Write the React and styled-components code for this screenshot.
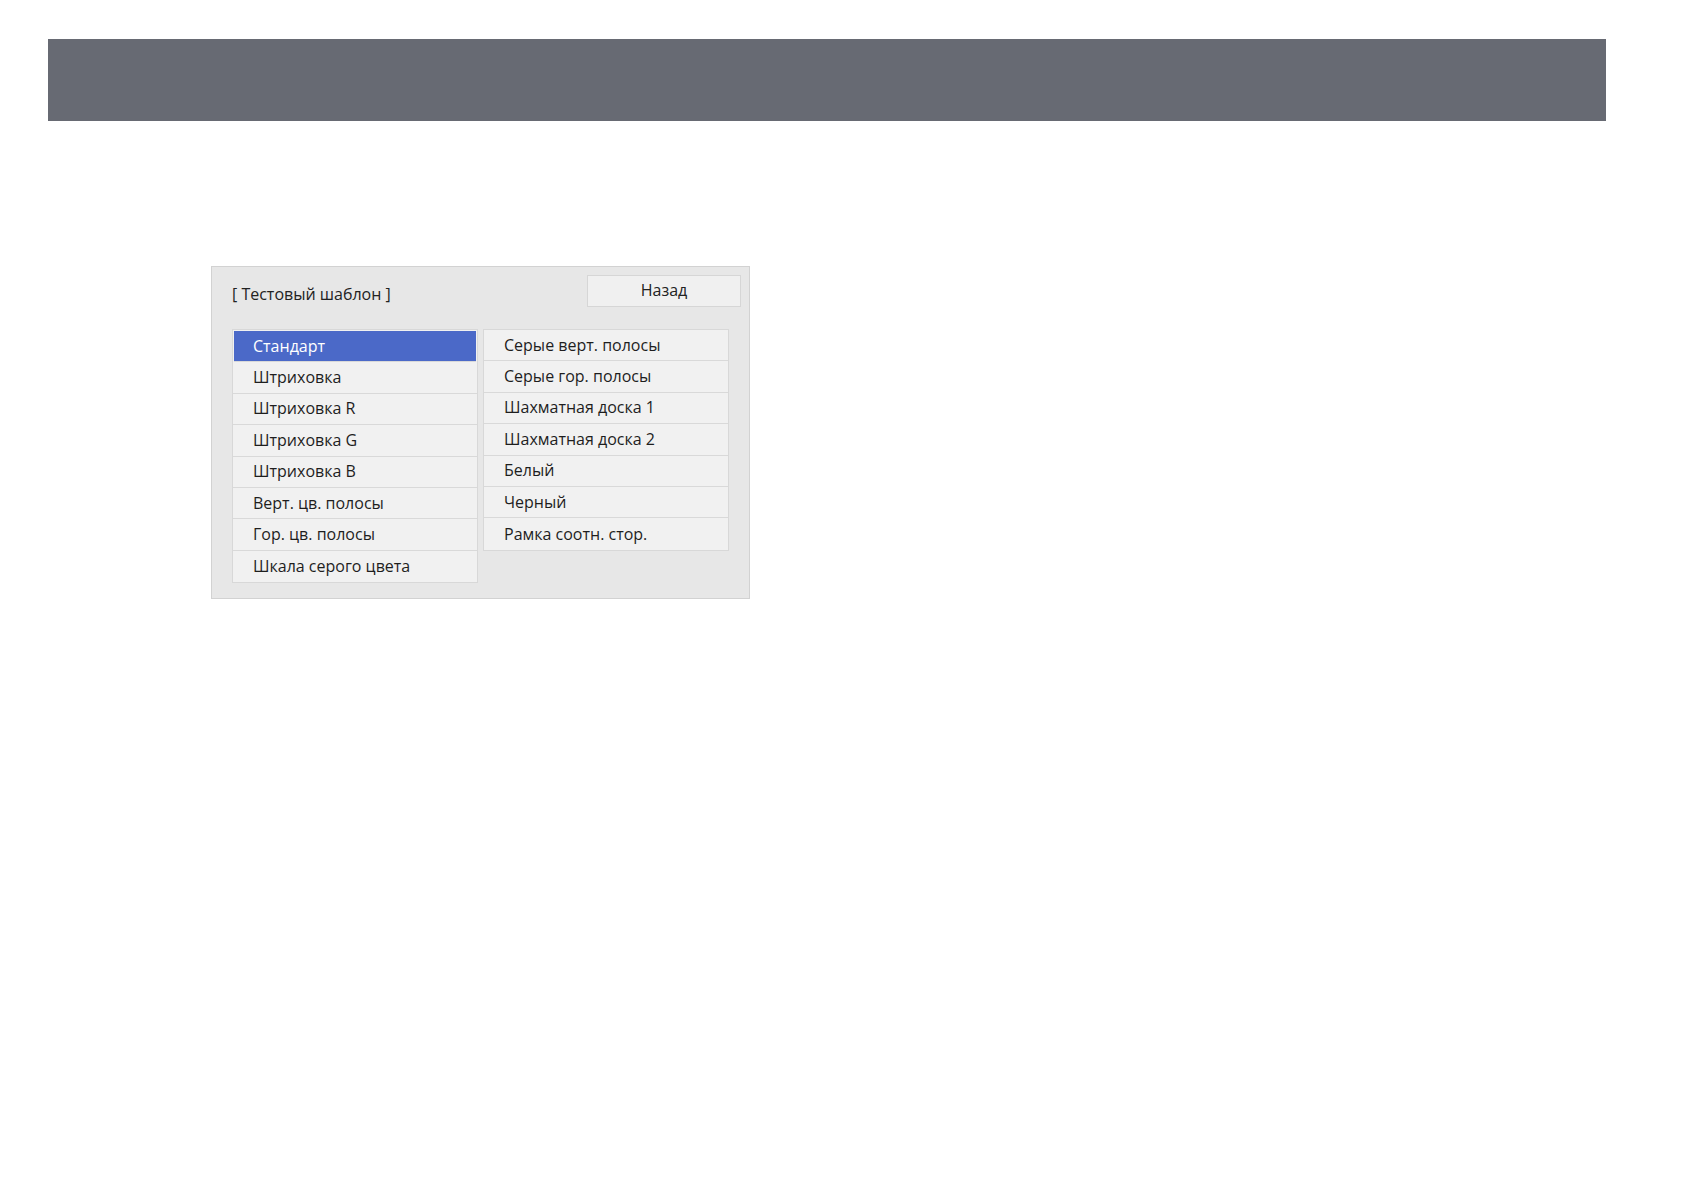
import React from 'react';
import styled, { createGlobalStyle } from 'styled-components';

const GlobalStyle = createGlobalStyle`
  html, body {
    margin: 0;
    padding: 0;
    background: #ffffff;
  }
  body {
    font-family: "Open Sans", "Noto Sans", "Liberation Sans", sans-serif;
  }
`

const Page = styled.div`
  width: 1684px;
  height: 1190px;
  padding: 39px 0 0 48px;
  box-sizing: border-box;
`

const HeaderBar = styled.div`
  width: 1558px;
  height: 82px;
  background: #676a73;
`

const Panel = styled.div`
  margin: 145px 0 0 163px;
  width: 539px;
  height: 333px;
  box-sizing: border-box;
  background: #e7e7e7;
  border: 1px solid #d2d2d2;
  padding: 8px 8px 0 20px;
`

const TopRow = styled.div`
  display: flex;
  align-items: flex-start;
  justify-content: space-between;
  height: 32px;
`

const Title = styled.span`
  font-size: 16px;
  color: #222;
  line-height: 32px;
  padding-top: 3px;
`

const BackButton = styled.div`
  width: 154px;
  height: 32px;
  box-sizing: border-box;
  background: #f0f0f0;
  border: 1px solid #d6d6d6;
  display: flex;
  align-items: center;
  justify-content: center;
  font-size: 16px;
  color: #222;
  padding-bottom: 3px;
`

const Columns = styled.div`
  display: flex;
  gap: 5px;
  margin-top: 22px;
  align-items: flex-start;
`

const List = styled.div`
  width: 246px;
  box-sizing: border-box;
  border: 1px solid #d8d8d8;
  background: #f1f1f1;
  display: flex;
  flex-direction: column;
`

const Item = styled.div`
  height: 31.4px;
  box-sizing: border-box;
  display: flex;
  align-items: center;
  padding-left: ${p => p.$active ? 19 : 20}px;
  padding-bottom: 1px;
  font-size: 16px;
  color: ${p => p.$active ? '#ffffff' : '#1e1e1e'};
  background: ${p => p.$active ? '#4b69c8' : 'transparent'};
  border-bottom: 1px solid #d9d9d9;
  ${p => p.$active && 'margin: 1px 1px 0 1px;'}
  &:last-child {
    border-bottom: none;
  }
`

const leftItems = [
  'Стандарт',
  'Штриховка',
  'Штриховка R',
  'Штриховка G',
  'Штриховка B',
  'Верт. цв. полосы',
  'Гор. цв. полосы',
  'Шкала серого цвета',
]

const rightItems = [
  'Серые верт. полосы',
  'Серые гор. полосы',
  'Шахматная доска 1',
  'Шахматная доска 2',
  'Белый',
  'Черный',
  'Рамка соотн. стор.',
]

export default function App() {
  return (
    <>
      <GlobalStyle />
      <Page>
        <HeaderBar />
        <Panel>
          <TopRow>
            <Title>[ Тестовый шаблон ]</Title>
            <BackButton>Назад</BackButton>
          </TopRow>
          <Columns>
            <List>
              {leftItems.map((name, i) => (
                <Item key={name} $active={i === 0}>{name}</Item>
              ))}
            </List>
            <List>
              {rightItems.map((name) => (
                <Item key={name}>{name}</Item>
              ))}
            </List>
          </Columns>
        </Panel>
      </Page>
    </>
  )
}
